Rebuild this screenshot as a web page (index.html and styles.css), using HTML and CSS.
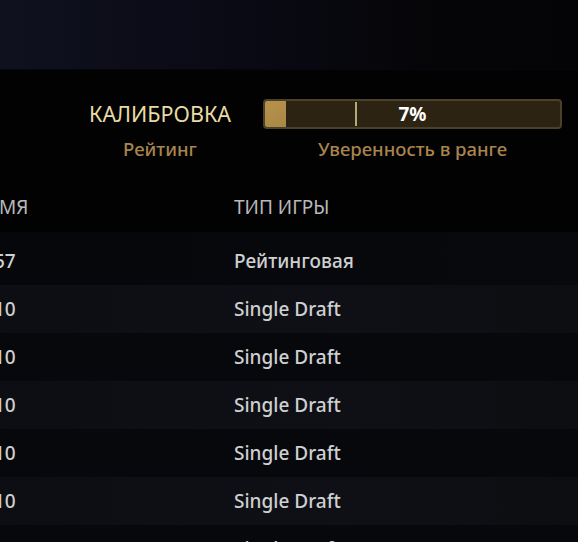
FILE: index.html
```html
<!DOCTYPE html>
<html lang="ru">
<head>
<meta charset="utf-8">
<link rel="stylesheet" href="styles.css">
</head>
<body>
<div class="hero"></div>
<section class="summary">
  <div class="stat rank">
    <div class="value calib">КАЛИБРОВКА</div>
    <div class="label">Рейтинг</div>
  </div>
  <div class="stat conf">
    <div class="bar">
      <div class="fill" style="width:7%"></div>
      <div class="marker"></div>
      <span class="pct">7%</span>
    </div>
    <div class="label">Уверенность в ранге</div>
  </div>
</section>
<div class="table">
  <div class="row head"><div class="c1">МЯ</div><div class="c2">ТИП ИГРЫ</div></div>
  <div class="row first"><div class="c1">57</div><div class="c2">Рейтинговая</div></div>
  <div class="row alt"><div class="c1">10</div><div class="c2">Single Draft</div></div>
  <div class="row"><div class="c1">10</div><div class="c2">Single Draft</div></div>
  <div class="row alt"><div class="c1">10</div><div class="c2">Single Draft</div></div>
  <div class="row"><div class="c1">10</div><div class="c2">Single Draft</div></div>
  <div class="row alt"><div class="c1">10</div><div class="c2">Single Draft</div></div>
  <div class="row"><div class="c1">10</div><div class="c2">Single Draft</div></div>
</div>
</body>
</html>
```
FILE: styles.css
```css
html, body {
  margin: 0;
  padding: 0;
  background: #020203;
  overflow: hidden;
  height: 542px;
  font-family: "Noto Sans", "Open Sans", sans-serif;
}
.hero {
  height: 70px;
  background: linear-gradient(90deg, #10111f 0%, #0a0a15 40%, #050508 75%, #040406 100%);
  border-bottom: 1px solid #07070b;
  box-sizing: border-box;
}
.summary {
  display: flex;
  height: 112px;
  box-sizing: border-box;
  padding-top: 29px;
}
.stat {
  display: flex;
  flex-direction: column;
  align-items: center;
}
.rank {
  width: 144px;
  margin-left: 88px;
}
.conf {
  width: 299px;
  margin-left: 31px;
}
.calib {
  color: #e8dba3;
  font-size: 21.5px;
  line-height: 30px;
  white-space: nowrap;
}
.label {
  color: #a9844e;
  font-size: 18.5px;
  font-weight: 500;
  line-height: 20px;
  margin-top: 10px;
  white-space: nowrap;
}
.bar {
  position: relative;
  width: 299px;
  height: 30px;
  box-sizing: border-box;
  border: 2px solid #4a412c;
  border-radius: 4px;
  background: #2c2312;
  display: flex;
  align-items: center;
  justify-content: center;
}
.fill {
  position: absolute;
  left: 0;
  top: 0;
  bottom: 0;
  background: linear-gradient(160deg, #b7924c, #a88845);
  border-radius: 2px 0 0 2px;
}
.marker {
  position: absolute;
  left: 90px;
  top: 1px;
  bottom: 1px;
  width: 2px;
  background: #b5ab72;
}
.pct {
  position: relative;
  color: #ffffff;
  font-weight: 700;
  font-size: 19px;
}
.table {
  margin-left: -6px;
}
.row {
  display: flex;
  align-items: center;
  height: 48px;
  background: #07080c;
  color: #cfd0d2;
  font-size: 19px;
  font-weight: 500;
}
.row.alt {
  background: linear-gradient(90deg, #0d0e13, #0e1015 60%, #0c0e12);
}
.row.head {
  background: #020203;
  color: #b8b9bb;
  font-weight: 400;
  height: 50px;
}
.row.first {
  height: 53px;
  padding-top: 5px;
  box-sizing: border-box;
  background: linear-gradient(90deg, #06070b, #08090d);
}
.c1 {
  width: 240px;
}
.head .c1 {
  padding-left: 5px;
  width: 235px;
}
```
